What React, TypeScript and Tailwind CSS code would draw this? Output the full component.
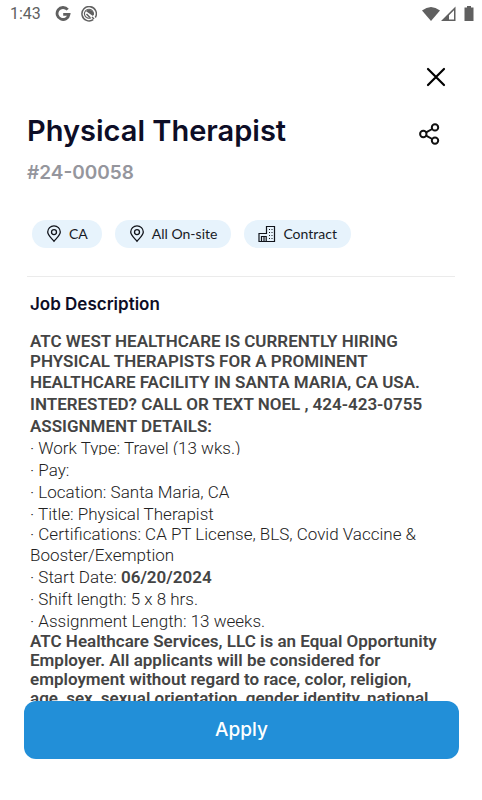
import type { ReactNode } from "react";

const details = [
    { label: "Pay:", value: "" },
    { label: "Location:", value: "Santa Maria, CA" },
    { label: "Title:", value: "Physical Therapist" },
];

function PinIcon() {
    return (
        <svg width="16" height="18" viewBox="0 0 16 18" fill="none" stroke="#10131a" strokeWidth="1.3" aria-hidden="true">
            <path d="M8 16.2C5.2 13.1 1.700 10.2 1.700 7.1a6.300 6.300 0 0 1 12.600 0c0 3.100-3.500 6-6.300 9.100Z" />
            <circle cx="8" cy="7.100" r="2.500" />
        </svg>
    );
}

function BuildingIcon() {
    return (
        <svg width="18" height="18" viewBox="0 0 18 18" fill="none" stroke="#10131a" strokeWidth="1.2" aria-hidden="true">
            <path d="M1 16.500V8.500h7.500v-7h8v15H1ZM3.500 16.500v-5h4.700v5M6 11.500v5" />
            <path d="M11 4.500h1M13.500 4.500h1M11 7.500h1M13.500 7.500h1M11 10.500h1M13.500 10.500h1M11 13.500h1M13.500 13.500h1" strokeWidth="1" />
        </svg>
    );
}

function Tag({ icon, children }: { icon: ReactNode; children: ReactNode }) {
    return (
        <li className="flex h-7 items-center gap-[7px] rounded-full bg-[#e7f3fc] px-3.5 font-['Lato',sans-serif] text-sm text-[#171b26]">
            {icon}
            {children}
        </li>
    );
}

export default function App() {
    return (
        <div className="flex h-screen w-full flex-col overflow-hidden bg-white font-['Roboto',sans-serif]">

            {/* Status bar */}
            <div className="flex h-7 shrink-0 items-center justify-between pl-2.5 pr-2 text-[#606060]">
                <div className="flex items-center gap-3.5">
                    <span className="text-base">1:43</span>
                    <div className="flex items-center gap-2.5">
                        <svg width="16" height="16" viewBox="0 0 16 16" fill="none" stroke="currentColor" strokeWidth="2.800" aria-hidden="true">
                            <path d="M12.700 3.700A6 6 0 1 0 14 8.300H8.200" />
                        </svg>
                        <svg width="16" height="16" viewBox="0 0 16 16" fill="none" stroke="currentColor" aria-hidden="true">
                            <path d="M12.200 13.700A7.200 7.200 0 1 1 14.300 11.500" strokeWidth="1.500" />
                            <path d="M10 11.800A4.500 4.500 0 1 1 12.300 9" strokeWidth="1.100" />
                            <path d="M5 5.200a4.300 4.300 0 0 1 7 4.800Z" fill="currentColor" stroke="none" />
                            <path d="m5.500 8 3.500 3.500M11 11l2 2" strokeWidth="1.500" />
                        </svg>
                    </div>
                </div>
                <div className="flex items-center">
                    <svg width="18" height="16" viewBox="0 0 18 16" fill="currentColor" aria-hidden="true">
                        <path d="M0 4.500Q9-2.500 18 4.500L9 15Z" />
                    </svg>
                    <svg className="ml-px" width="15" height="16" viewBox="0 0 15 16" fill="currentColor" aria-hidden="true">
                        <path d="M14.500.5V15H0ZM13 4.200 8 9.200v4.300h5Z" fillRule="evenodd" />
                    </svg>
                    <svg className="ml-2" width="10" height="16" viewBox="0 0 10 16" fill="currentColor" aria-hidden="true">
                        <path d="M3 0h4v1.500h2.500V15H.5V1.500H3Z" />
                    </svg>
                </div>
            </div>

            {/* Close */}
            <div className="mt-8 flex shrink-0 justify-end pr-[30px]">
                <button type="button" aria-label="Close" className="p-1">
                    <svg width="26" height="26" viewBox="0 0 26 26" fill="none" stroke="#000" strokeWidth="2.200" strokeLinecap="round">
                        <path d="m6 5 16 16M22 5l-16 16" />
                    </svg>
                </button>
            </div>

            {/* Title */}
            <header className="mt-3.5 flex shrink-0 items-start justify-between pl-[27px] pr-10">
                <div>
                    <h1 className="font-['Inter',sans-serif] text-[29px] font-semibold leading-[46px] text-[#0d0d26]">Physical Therapist</h1>
                    <p className="font-['Inter',sans-serif] text-[19px] font-semibold leading-[38px] text-[#95969d]">#24-00058</p>
                </div>
                <button type="button" aria-label="Share" className="mt-3.5">
                    <svg width="24" height="24" viewBox="0 0 24 24" fill="none" stroke="#111" strokeWidth="2">
                        <circle cx="5.300" cy="12" r="3.200" />
                        <circle cx="17" cy="5.400" r="3.200" />
                        <circle cx="17" cy="18.600" r="3.200" />
                        <path d="m8.100 10.400 6.100-3.400M8.100 13.600l6.100 3.400" />
                    </svg>
                </button>
            </header>

            <ul className="ml-8 mt-7 flex shrink-0 gap-[13px]">
                <Tag icon={<PinIcon />}>CA</Tag>
                <Tag icon={<PinIcon />}>All On-site</Tag>
                <Tag icon={<BuildingIcon />}>Contract</Tag>
            </ul>

            <hr className="mx-[27px] mt-7 shrink-0 border-[#ebebeb]" />

            {/* Description */}
            <main className="min-h-0 flex-1 overflow-hidden pl-[30px] pr-10 text-[17px] leading-[22px] text-[#444]">
                <h2 className="my-4 font-['Inter',sans-serif] text-[17px] font-semibold leading-[22px] text-[#0d0d26]">Job Description</h2>
                <div className="font-semibold">
                    <p className="leading-5">ATC WEST HEALTHCARE IS CURRENTLY HIRING PHYSICAL THERAPISTS FOR A PROMINENT</p>
                    <p>HEALTHCARE FACILITY IN SANTA MARIA, CA USA.</p>
                    <p>INTERESTED? CALL OR TEXT NOEL , 424-423-0755</p>
                    <p>ASSIGNMENT DETAILS:</p>
                </div>
                <ul className="font-light text-[#222]">
                    <li className="mb-1 h-[18px] overflow-hidden">· Work Type: Travel (13 wks.)</li>
                    {details.map((item) => (
                        <li key={item.label}>· {item.label} {item.value}</li>
                    ))}
                    <li>
                        <p className="leading-[19px]">· Certifications: CA PT License, BLS, Covid Vaccine &amp;</p>
                        <p>Booster/Exemption</p>
                    </li>
                    <li>· Start Date: <strong className="font-semibold text-[#444]">06/20/2024</strong></li>
                    <li>· Shift length: 5 x 8 hrs.</li>
                    <li>· Assignment Length: 13 weeks.</li>
                </ul>
                <p className="font-semibold leading-[19px]">
                    ATC Healthcare Services, LLC is an Equal Opportunity Employer. All applicants will be considered for employment without regard to race, color, religion, age, sex, sexual orientation, gender identity, national
                </p>
            </main>

            {/* Apply */}
            <footer className="shrink-0 pb-[41px] pl-6 pr-[23px]">
                <button type="button" className="h-[58px] w-full rounded-xl bg-[#228fd8] font-['Inter',sans-serif] text-[19px] font-medium text-white">
                    Apply
                </button>
            </footer>
        </div>
    );
}
